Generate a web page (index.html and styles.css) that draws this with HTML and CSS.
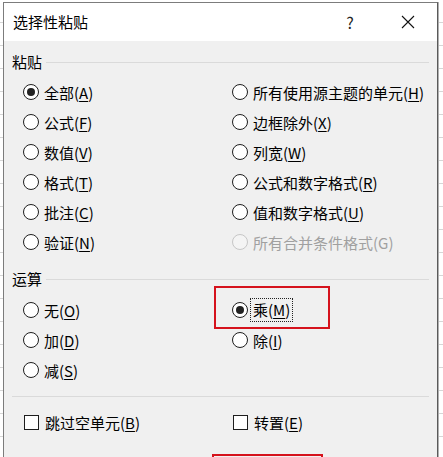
FILE: index.html
```html
<!DOCTYPE html>
<html lang="zh-CN">
<head>
<meta charset="utf-8">
<title>选择性粘贴</title>
<link rel="stylesheet" href="styles.css">
</head>
<body>
<div class="dialog">
  <div class="titlebar">
    <span class="title">选择性粘贴</span>
    <span class="help">?</span>
    <span class="close"><svg width="14" height="14" viewBox="0 0 14 14"><path d="M1 1 L13 13 M13 1 L1 13" stroke="#111" stroke-width="1.1" fill="none"/></svg></span>
  </div>
  <div class="content">
    <div class="group-label"><span>粘贴</span><i class="rule"></i></div>
    <div class="grid">
      <div class="opt"><span class="radio on"></span><span>全部(<u>A</u>)</span></div>
      <div class="opt"><span class="radio"></span><span>所有使用源主题的单元(<u>H</u>)</span></div>
      <div class="opt"><span class="radio"></span><span>公式(<u>F</u>)</span></div>
      <div class="opt"><span class="radio"></span><span>边框除外(<u>X</u>)</span></div>
      <div class="opt"><span class="radio"></span><span>数值(<u>V</u>)</span></div>
      <div class="opt"><span class="radio"></span><span>列宽(<u>W</u>)</span></div>
      <div class="opt"><span class="radio"></span><span>格式(<u>T</u>)</span></div>
      <div class="opt"><span class="radio"></span><span>公式和数字格式(<u>R</u>)</span></div>
      <div class="opt"><span class="radio"></span><span>批注(<u>C</u>)</span></div>
      <div class="opt"><span class="radio"></span><span>值和数字格式(<u>U</u>)</span></div>
      <div class="opt"><span class="radio"></span><span>验证(<u>N</u>)</span></div>
      <div class="opt disabled"><span class="radio"></span><span>所有合并条件格式(G)</span></div>
    </div>
    <div class="group-label second"><span>运算</span><i class="rule"></i></div>
    <div class="grid ops">
      <div class="opt"><span class="radio"></span><span>无(<u>O</u>)</span></div>
      <div class="opt"><span class="radio on"></span><span class="focus">乘(<u>M</u>)</span></div>
      <div class="opt"><span class="radio"></span><span>加(<u>D</u>)</span></div>
      <div class="opt"><span class="radio"></span><span>除(<u>I</u>)</span></div>
      <div class="opt"><span class="radio"></span><span>减(<u>S</u>)</span></div>
      <div class="opt"></div>
    </div>
    <div class="sep"></div>
    <div class="grid checks">
      <div class="opt"><span class="check"></span><span>跳过空单元(<u>B</u>)</span></div>
      <div class="opt"><span class="check"></span><span>转置(<u>E</u>)</span></div>
    </div>
    <div class="buttons"><div class="mark-btn"></div></div>
  </div>
  <div class="mark-box"></div>
</div>
</body>
</html>
```
FILE: styles.css
```css
html, body {
  margin: 0;
  padding: 0;
  height: 100%;
  overflow: hidden;
}
body {
  background-color: #ffffff;
  background-image: repeating-linear-gradient(to bottom, transparent 0, transparent 22px, #d6d6d6 22px, #d6d6d6 23px);
  font-family: "Noto Sans CJK SC", "Microsoft YaHei", sans-serif;
  font-size: 15px;
  color: #000;
}
.dialog {
  position: relative;
  margin: 2px 0 0 3px;
  width: 433px;
  height: 480px;
  border: 1px solid #7c7c7c;
  border-right-color: #5a5a5a;
  box-shadow: 1px 0 0 #b0b0b0;
  background: #f0f0f0;
}
.titlebar {
  display: flex;
  align-items: center;
  height: 38px;
  background: #fff;
  padding: 0 19px 0 9px;
}
.title {
  flex: 1;
  line-height: 20px;
}
.help {
  width: 20px;
  text-align: center;
  margin-right: 38px;
  font-family: "Noto Sans CJK SC", sans-serif;
  font-size: 16px;
  color: #222;
}
.close {
  width: 20px;
  display: flex;
  justify-content: center;
  align-items: center;
}
.content {
  padding: 11px 8px 0 8px;
}
.group-label {
  display: flex;
  align-items: center;
  height: 20px;
  line-height: 20px;
  margin-bottom: 5px;
}
.group-label.second {
  margin-top: 12px;
  margin-bottom: 6px;
}
.rule {
  flex: 1;
  height: 1px;
  background: #dadada;
  margin-left: 4px;
}
.grid {
  display: grid;
  grid-template-columns: 209px 1fr;
  padding-left: 12px;
}
.opt {
  display: flex;
  align-items: center;
  height: 30px;
  gap: 6px;
  white-space: nowrap;
}
.opt u {
  text-decoration: underline;
  text-underline-offset: 2px;
}
.radio {
  box-sizing: border-box;
  width: 16px;
  height: 16px;
  border: 1px solid #1e1e1e;
  border-radius: 50%;
  background: #fff;
  display: flex;
  align-items: center;
  justify-content: center;
  flex: none;
  margin-left: -1px;
  margin-right: -1px;
}
.radio.on::after {
  content: "";
  width: 8px;
  height: 8px;
  border-radius: 50%;
  background: #222;
}
.disabled {
  color: #a0a0a0;
}
.disabled .radio {
  border-color: #c6c6c6;
  background: #f4f4f4;
}
.focus {
  line-height: 20px;
  outline: 1px dotted #222;
  outline-offset: 1px;
  padding: 0 1px;
  margin-left: -1px;
}
.check {
  box-sizing: border-box;
  width: 15px;
  height: 15px;
  border: 1px solid #1e1e1e;
  background: #fff;
  flex: none;
}
.sep {
  height: 1px;
  background: #dadada;
  margin-top: 11px;
}
.checks {
  margin-top: 10px;
}
.buttons {
  display: flex;
  padding-left: 200px;
  margin-top: 17px;
}
.mark-btn {
  width: 107px;
  height: 30px;
  border: 2px solid #d5121c;
}
.mark-box {
  position: absolute;
  left: 210px;
  top: 283px;
  width: 112px;
  height: 39px;
  border: 2px solid #d5121c;
}
```
